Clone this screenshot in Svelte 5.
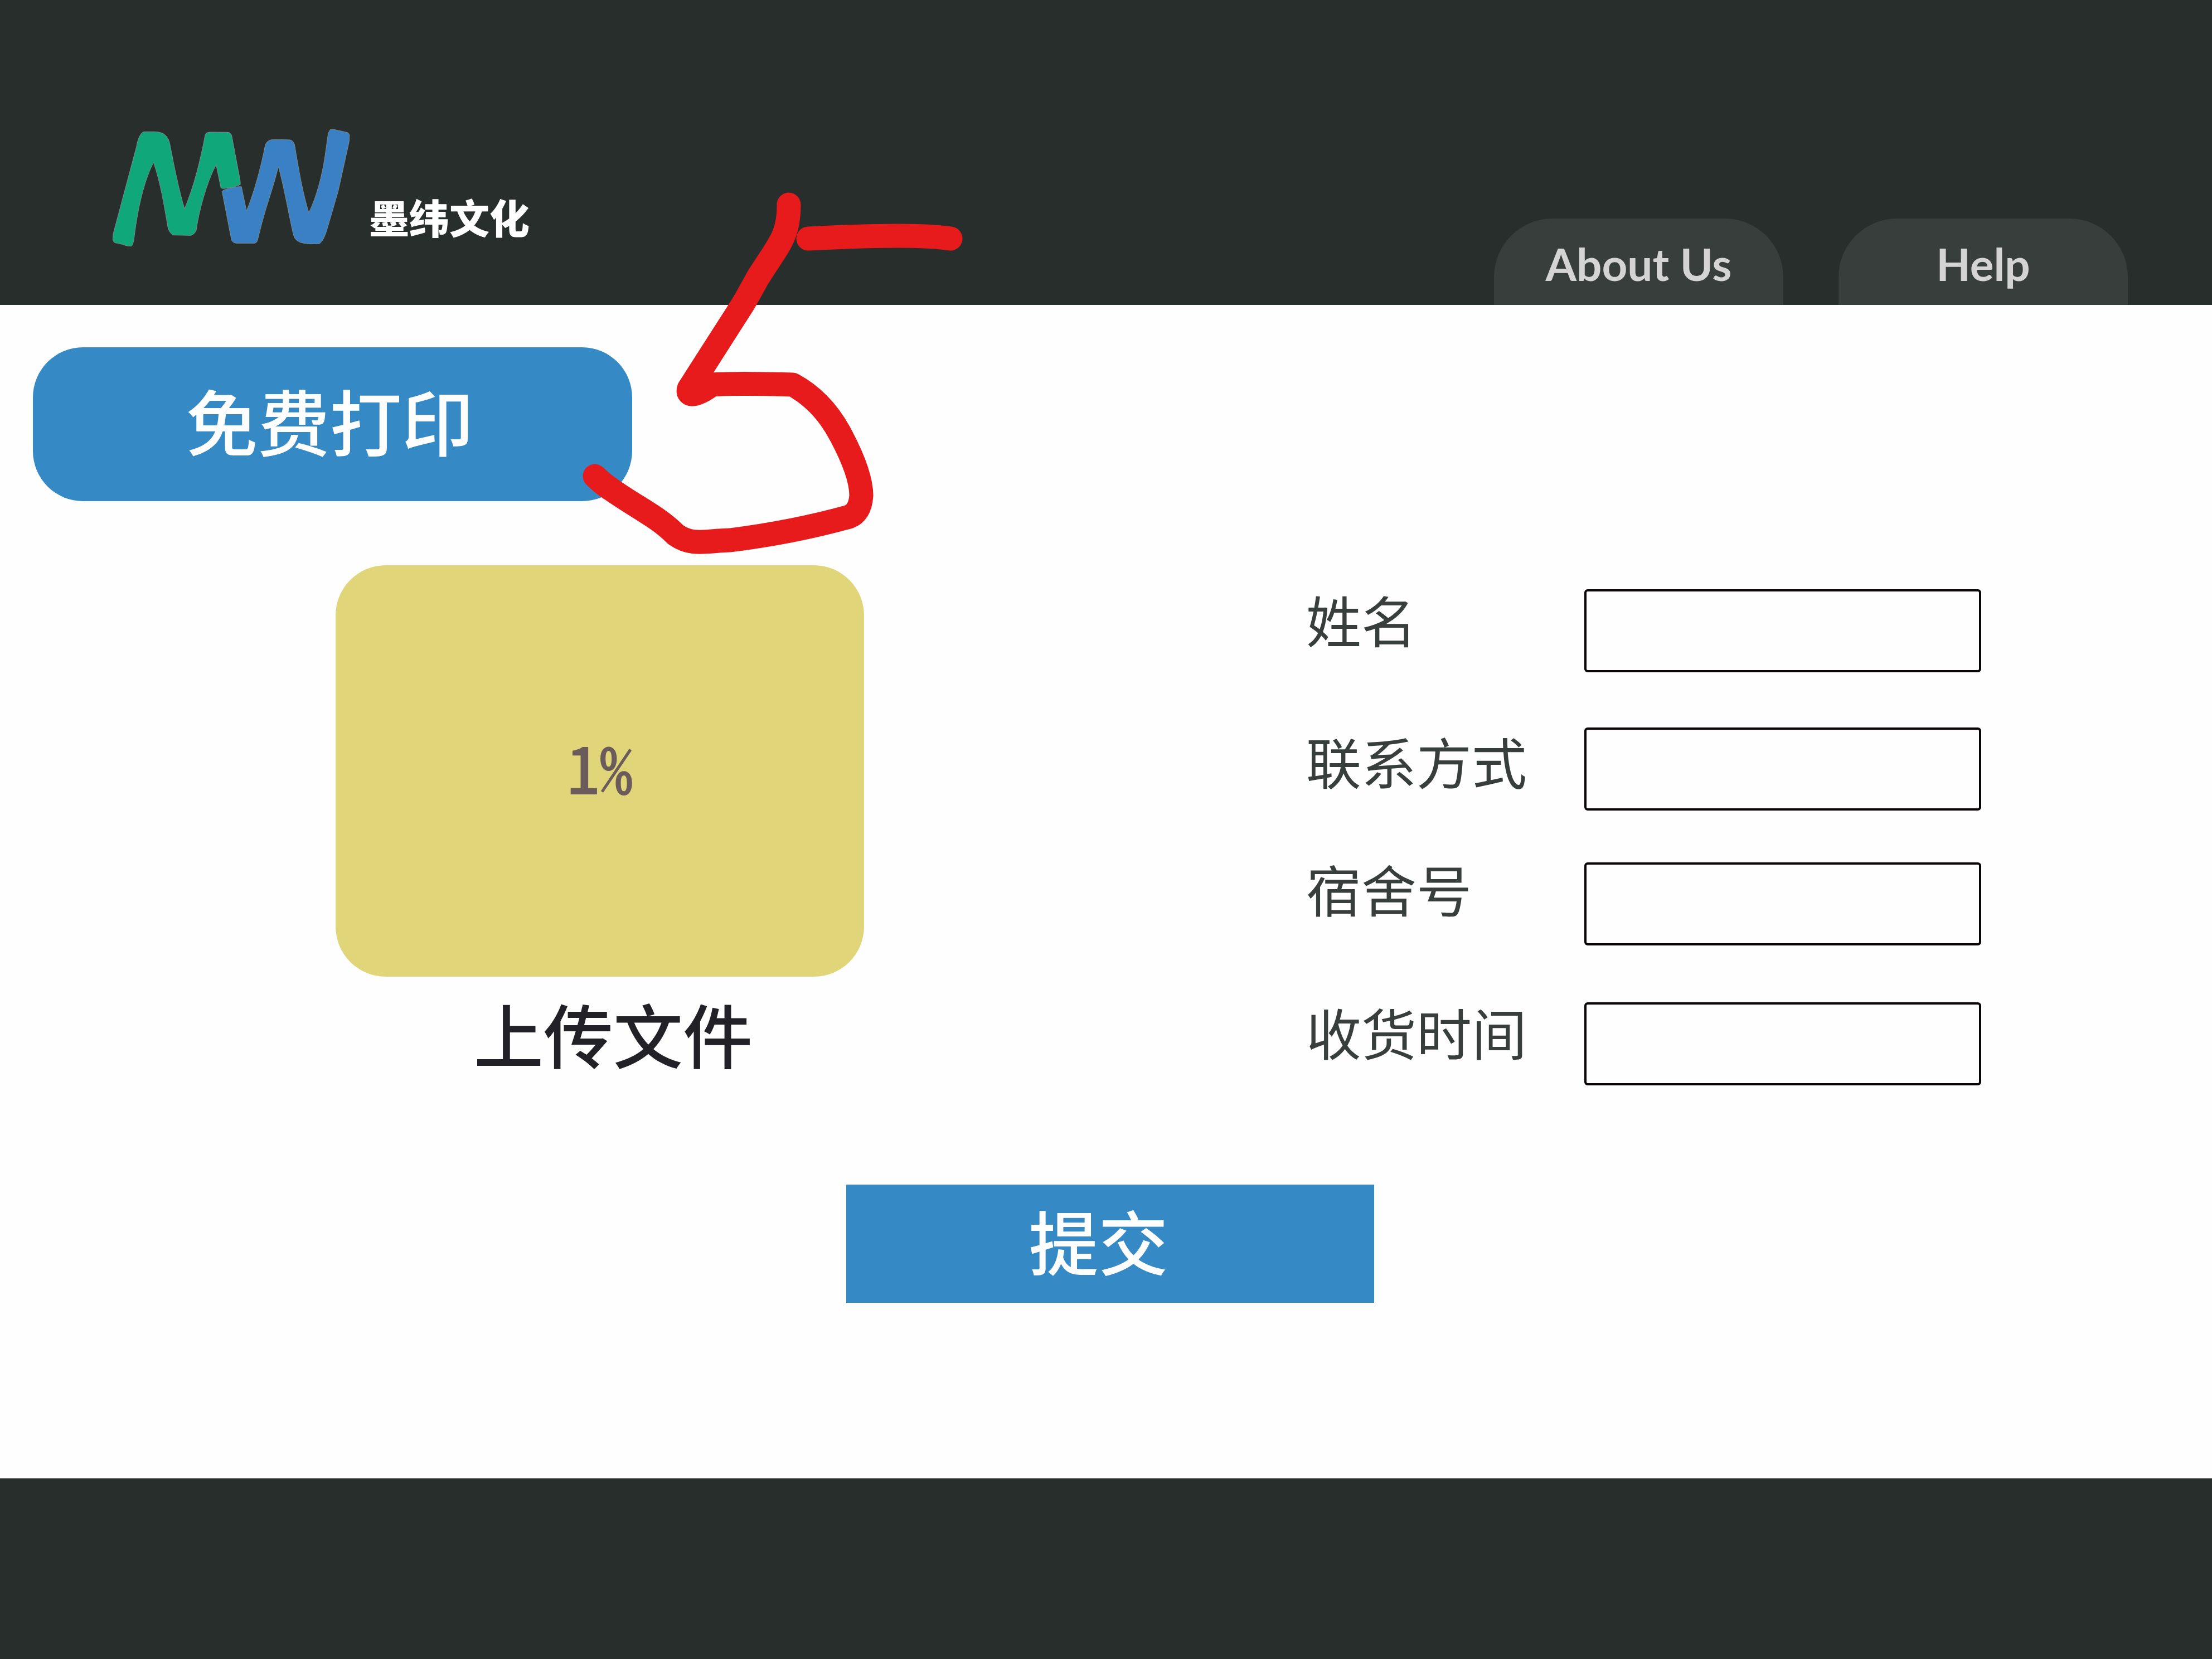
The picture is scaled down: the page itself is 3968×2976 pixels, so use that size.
<script>
  const links = ['About Us', 'Help'];
  const fields = [
    { id: 'name', label: '姓名' },
    { id: 'contact', label: '联系方式' },
    { id: 'room', label: '宿舍号' },
    { id: 'time', label: '收货时间' }
  ];
  let values = $state({ name: '', contact: '', room: '', time: '' });
  let progress = $state(1);
</script>

<div class="page">
  <header class="header">
    <div class="brand">
      <svg class="logo" viewBox="200 230 432 216" aria-hidden="true">
        <g transform="translate(180 200) scale(0.5102 0.3333)">
          <path
            class="green"
            d="M153 109 Q146 113 141 125 Q131 150 127 190 L45 660 L44 690 Q46 706 55 708 Q62 707 68 713 Q80 713 85 719 Q92 725 109 725 Q114 720 118 690 C128 560 148 390 187 274 C211 380 225 510 237 620 Q242 655 257 665 L318 667 Q330 663 337 640 C346 540 374 380 407 286 L424 411 Q427 416 437 414 L466 408 L492 394 Q493 380 489 350 L462 132 Q460 116 449 112 L385 111 Q372 113 369 124 C352 260 330 400 296 524 C276 420 260 300 245 180 Q241 140 223 121 Q208 108 184 109 Z"
          />
          <path
            class="blue"
            d="M428 430 Q432 422 444 418 L476 406 L496 404 L500 435 L514 535 C540 440 565 300 580 180 Q586 156 602 152 L630 151 L667 153 Q679 157 683 180 C698 320 712 440 733 545 C760 460 779 350 790 240 L800 130 Q803 105 809 97 L822 96 Q830 102 843 104 L868 113 Q875 117 876 128 L875 160 L836 430 L796 640 Q785 695 771 711 Q764 715 755 712 Q735 714 715 709 Q685 701 679 665 C662 550 645 400 626 296 C610 400 585 500 568 600 L554 685 Q552 707 542 709 L478 709 Q465 707 461 690 Z"
          />
        </g>
      </svg>
      <span class="brand-name">墨纬文化</span>
    </div>
    <nav class="nav">
      {#each links as link}
        <a class="tab" href="#top">{link}</a>
      {/each}
    </nav>
  </header>

  <main class="main">
    <button class="print" type="button">免费打印</button>

    <form class="order" onsubmit={(e) => e.preventDefault()}>
      <div class="columns">
        <label class="upload">
          <input class="file" type="file" />
          <span class="drop">{progress}%</span>
          <span class="caption">上传文件</span>
        </label>

        <div class="details">
          <div class="labels">
            {#each fields as field}
              <label for={field.id}>{field.label}</label>
            {/each}
          </div>
          <div class="inputs">
            {#each fields as field}
              <input id={field.id} type="text" bind:value={values[field.id]} />
            {/each}
          </div>
        </div>
      </div>

      <div class="actions">
        <button class="submit" type="submit">提交</button>
      </div>
    </form>
  </main>

  <footer class="footer"></footer>

  <!-- hand-drawn "5" marker lying over the page -->
  <svg class="marker" viewBox="1040 340 700 660" aria-hidden="true">
    <path
      d="M1415 367 C1416 425 1394 442 1359 499 C1345 524 1341 532 1332 547 L1236 697 C1231 712 1249 711 1277 690 Q1320 687 1422 690 Q1477 720 1509 782 Q1545 850 1545 889 Q1543 919 1523 927 Q1422 955 1310 969 L1290 970 C1250 974 1233 974 1212 959 C1180 927 1145 912 1095 877 Q1080 867 1067 854"
    />
    <path d="M1450 428 Q1640 418 1705 428" />
  </svg>
</div>

<style>
  :global(body) {
    margin: 0;
    background: #fefefe;
  }

  .page {
    position: relative;
    display: flex;
    flex-direction: column;
    min-height: 100vh;
    font-family: 'Noto Sans CJK SC', sans-serif;
  }

  .header {
    display: flex;
    justify-content: space-between;
    align-items: flex-end;
    box-sizing: border-box;
    height: 547px;
    padding: 0 151px 0 200px;
    background: #282e2c;
  }

  .brand {
    display: flex;
    align-items: flex-end;
    gap: 30px;
    padding-bottom: 101px;
  }

  .logo {
    width: 432px;
    height: 216px;
  }

  .logo path {
    stroke: #7b8b90;
    stroke-width: 1;
    vector-effect: non-scaling-stroke;
  }

  .green {
    fill: #10a87b;
  }

  .blue {
    fill: #3980c4;
  }

  .brand-name {
    color: #fefefe;
    font-size: 72px;
    font-weight: 900;
    line-height: 116px;
  }

  .nav {
    display: flex;
    gap: 99px;
  }

  .tab {
    box-sizing: border-box;
    width: 519px;
    height: 155px;
    border-radius: 105px 105px 0 0;
    background: #383e3c;
    color: #d4d4d4;
    font-family: Lato, sans-serif;
    font-size: 80px;
    font-weight: 700;
    line-height: 162px;
    text-align: center;
    text-decoration: none;
  }

  .main {
    flex: 1;
  }

  button {
    border: 0;
    padding: 0;
    background: #3589c5;
    color: #fefefe;
    font-family: inherit;
    font-weight: 500;
    cursor: pointer;
  }

  .print {
    display: block;
    width: 1075px;
    height: 276px;
    margin: 76px 0 0 59px;
    padding: 0 10px 16px 0;
    border-radius: 90px;
    font-size: 129px;
    line-height: 192px;
  }

  .order {
    padding-top: 115px;
  }

  .columns {
    display: flex;
    justify-content: space-between;
    padding: 0 414px 0 602px;
  }

  .upload {
    position: relative;
    display: flex;
    flex-direction: column;
    width: 948px;
    cursor: pointer;
  }

  .file {
    position: absolute;
    width: 1px;
    height: 1px;
    opacity: 0;
  }

  .drop {
    display: flex;
    align-items: center;
    justify-content: center;
    box-sizing: border-box;
    height: 738px;
    padding-bottom: 20px;
    border-radius: 90px;
    background: #e1d57a;
    color: #6b5b5b;
    font-size: 118px;
    font-weight: 500;
    font-feature-settings: 'hwid';
  }

  .caption {
    padding: 8px 0 0 48px;
    color: #222127;
    font-size: 125px;
    font-weight: 500;
    line-height: 185px;
    text-align: center;
  }

  .details {
    display: flex;
    padding-top: 38px;
  }

  .labels {
    display: grid;
    grid-template-rows: 254px 229px 257px 149px;
    width: 499px;
    color: #383e3b;
    font-size: 99px;
    line-height: 117px;
  }

  .inputs {
    display: grid;
    grid-template-rows: 248px 242px 251px 149px;
    padding-top: 5px;
  }

  .inputs input {
    box-sizing: border-box;
    width: 712px;
    height: 149px;
    padding: 0 32px;
    border: 4px solid #0a0506;
    border-radius: 6px;
    background: #fefefe;
    color: #383e3b;
    font-family: inherit;
    font-size: 80px;
  }

  .actions {
    display: flex;
    justify-content: center;
    padding: 178px 0 0 15px;
  }

  .submit {
    width: 947px;
    height: 212px;
    padding: 0 42px 16px 0;
    font-size: 125px;
    line-height: 185px;
  }

  .footer {
    height: 324px;
    background: #282e2c;
  }

  .marker {
    position: absolute;
    top: 340px;
    left: 1040px;
    width: 700px;
    height: 660px;
    pointer-events: none;
  }

  .marker path {
    fill: none;
    stroke: #e71b1b;
    stroke-width: 43;
    stroke-linecap: round;
    stroke-linejoin: round;
  }
</style>
